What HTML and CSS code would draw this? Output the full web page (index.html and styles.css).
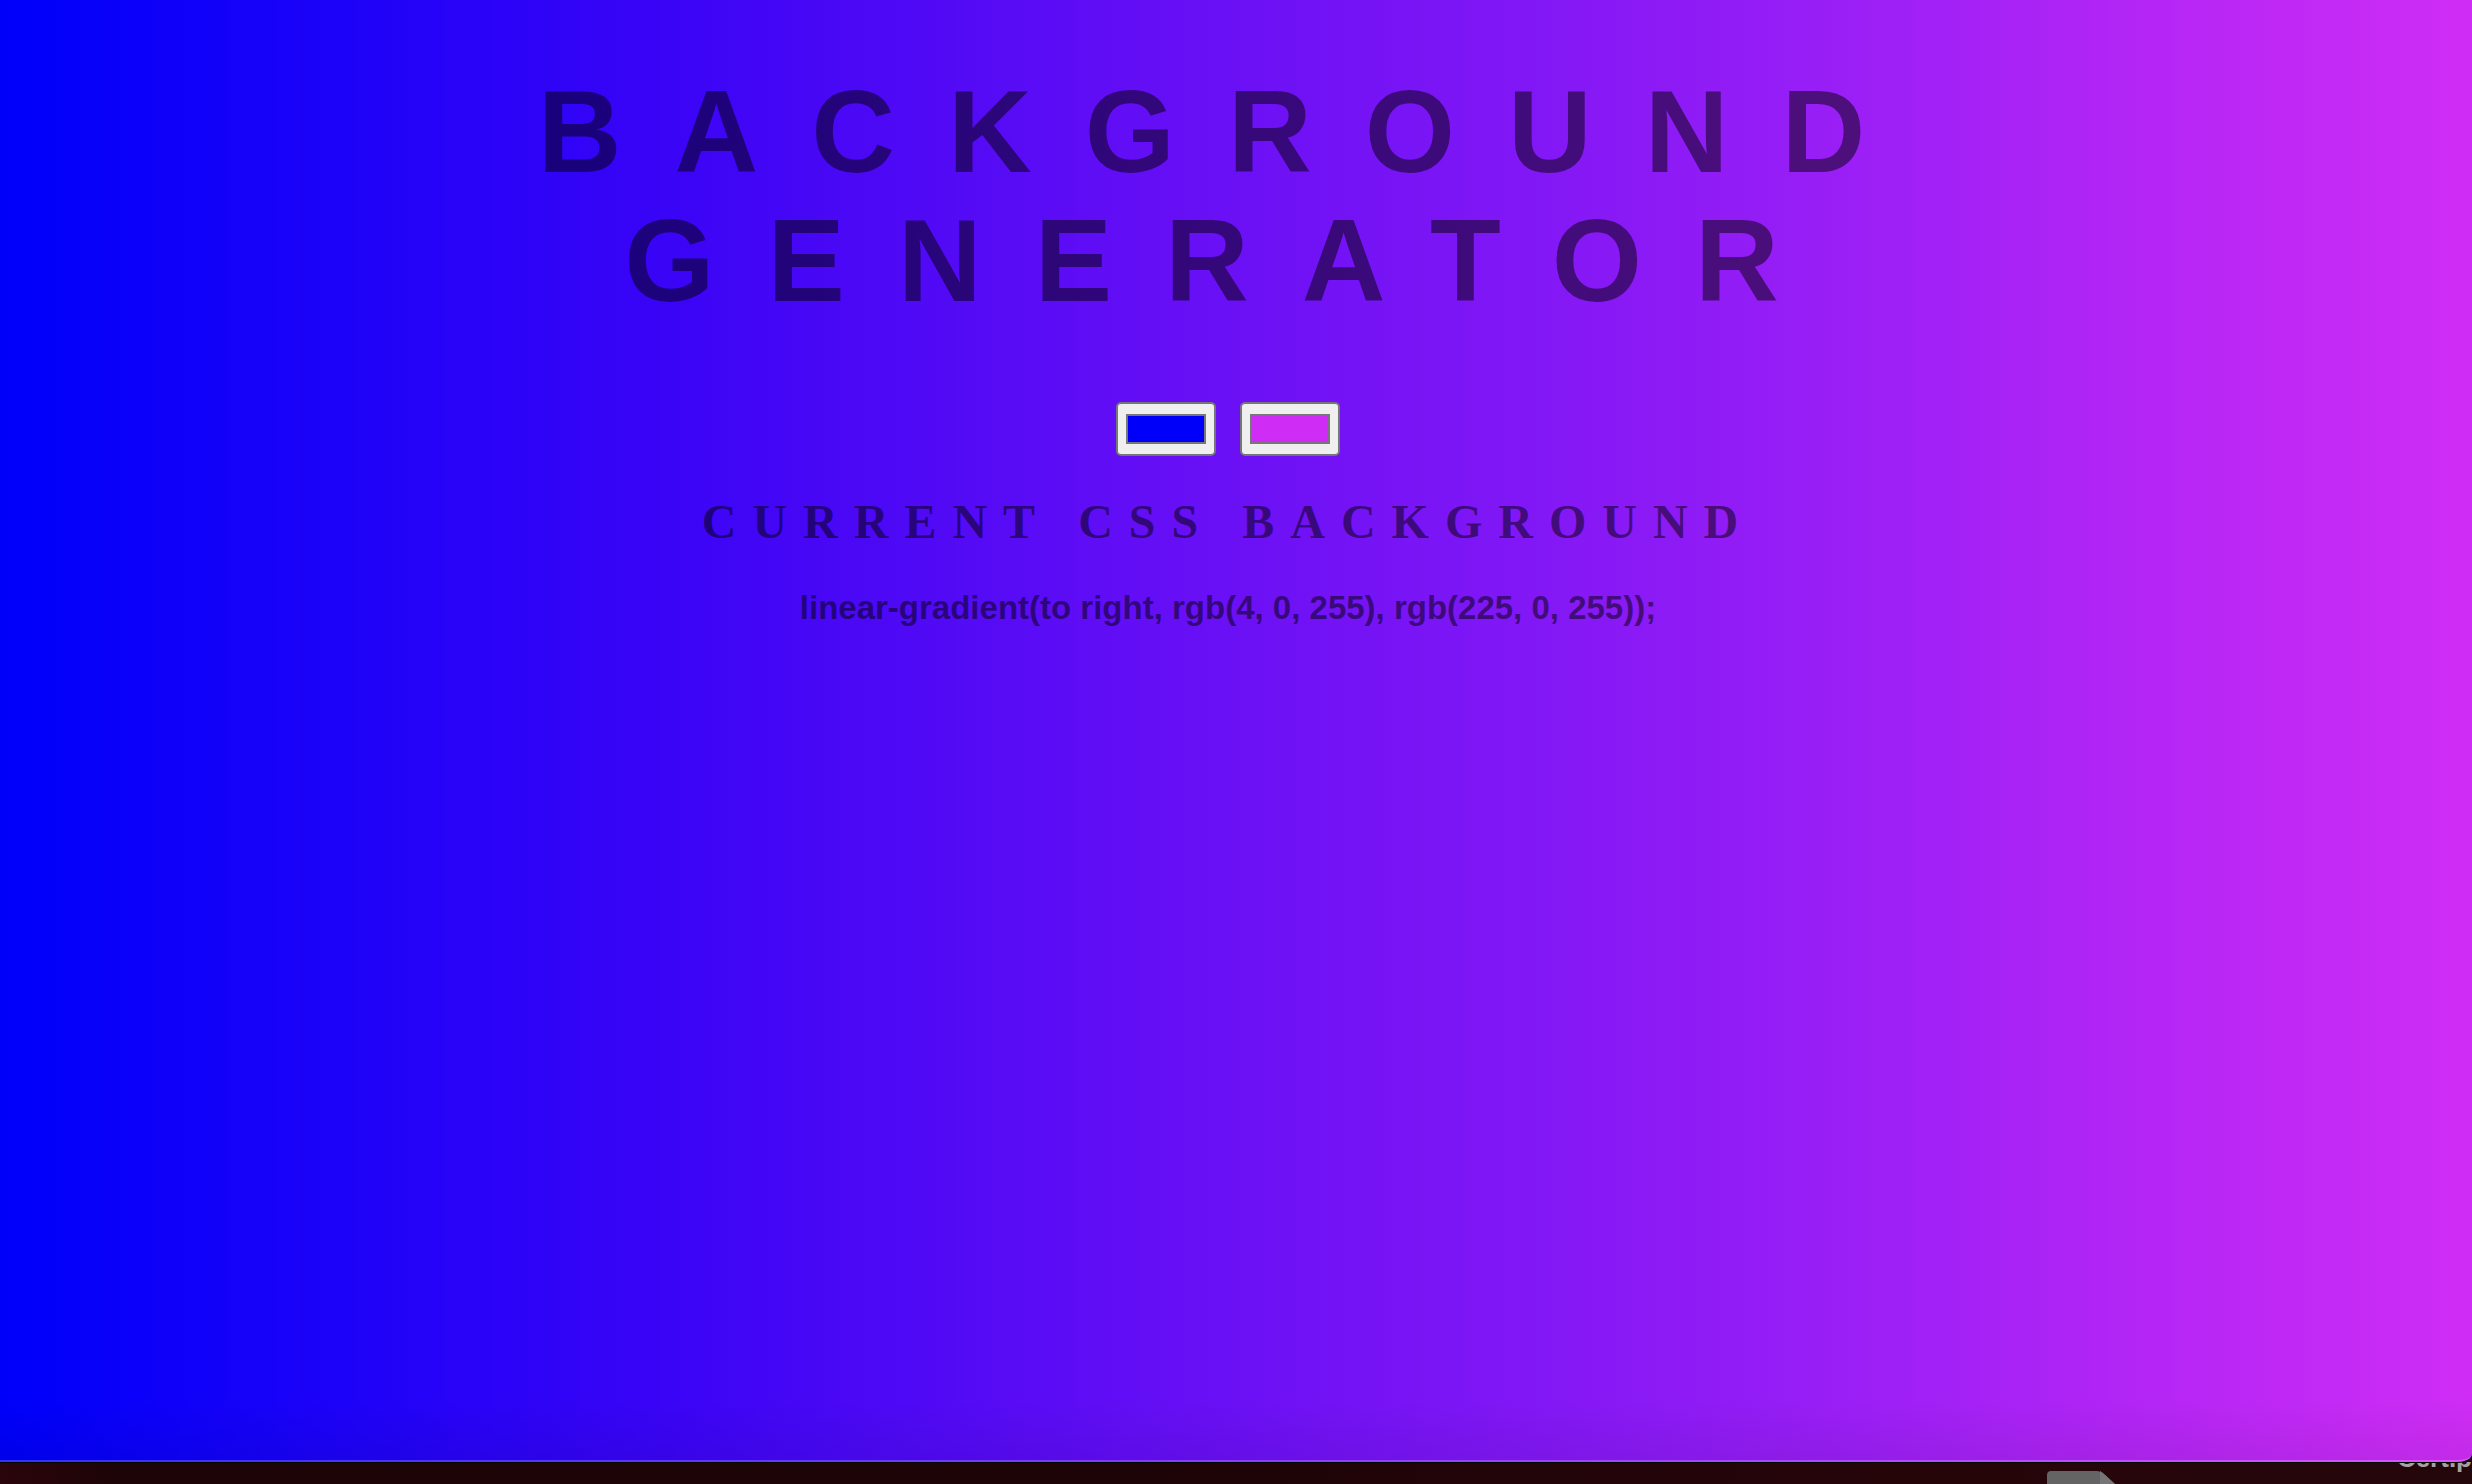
FILE: index.html
```html
<!DOCTYPE html>
<html lang="en">
<head>
<meta charset="utf-8">
<title>Background Generator</title>
<meta name="viewport" content="width=device-width, initial-scale=1">
<link rel="stylesheet" href="styles.css">
</head>
<body>
<main class="generator">
  <h1 class="title">Background Generator</h1>
  <div class="pickers">
    <input class="picker" type="color" value="#0000fa" aria-label="First color">
    <input class="picker" type="color" value="#cf2df5" aria-label="Second color">
  </div>
  <h2 class="subtitle">Current CSS Background</h2>
  <h3 class="css-value">linear-gradient(to right, rgb(4, 0, 255), rgb(225, 0, 255));</h3>
</main>
<footer class="desktop">
  <svg class="file-icon" viewBox="0 0 68 16" aria-hidden="true">
    <path d="M0 16V4Q0 0 4 0H50Q54 0 57 3L68 13V16Z" fill="#656465"/>
    <path d="M53 0Q55 1 57 3L68 13V16H53Z" fill="#777577"/>
  </svg>
  <span class="file-name">Cert.p</span>
</footer>
</body>
</html>
```
FILE: styles.css
```css
* {
  box-sizing: border-box;
}

body {
  margin: 0;
  min-height: 100vh;
  display: flex;
  flex-direction: column;
  overflow: hidden;
  background: #1e0408;
  font-family: "Liberation Sans", Arial, sans-serif;
  color: rgba(0, 0, 0, 0.5);
  text-align: center;
}

.generator {
  flex: 1;
  padding: 68px 16px 0 0;
  border-bottom: 2px solid rgba(255, 255, 255, 0.2);
  border-radius: 0 0 15px 0 / 0 0 8px 0;
  background:
    linear-gradient(to top, rgba(0, 0, 0, 0.06), transparent 60px),
    linear-gradient(to right, #0000fa, #0300fa 2%, #3a04f6 27%, #6b10f5 50%, #9b1ff6 75%, #cf2df5);
  box-shadow: 0 1px 0 #000;
  position: relative;
}

.title {
  margin: 0;
  font-size: 116px;
  line-height: 129px;
  letter-spacing: 53px;
  text-transform: uppercase;
}

.pickers {
  display: flex;
  justify-content: center;
  gap: 24px;
  margin: 76px 0 38px;
}

.picker {
  appearance: none;
  width: 100px;
  height: 54px;
  padding: 0;
  border: 2px solid #767676;
  border-radius: 5px;
  background: #efefef;
}

.picker::-webkit-color-swatch-wrapper {
  padding: 10px 8px;
}

.picker::-webkit-color-swatch {
  border: 2px solid #777;
  border-radius: 0;
}

.subtitle {
  margin: 0;
  font-family: "Liberation Serif", "Times New Roman", serif;
  font-size: 48px;
  line-height: 56px;
  letter-spacing: 16px;
  text-transform: uppercase;
}

.css-value {
  margin: 40px 0 0;
  font-size: 33px;
  line-height: 36px;
}

.desktop {
  display: flex;
  justify-content: flex-end;
  gap: 282px;
  height: 22px;
  overflow: hidden;
  background: linear-gradient(to right, #2a050b, #1c0407 5%, #1c0407 40%, #260509 80%, #24070b);
}

.file-icon {
  flex: none;
  width: 68px;
  height: 16px;
  margin-top: 9px;
}

.file-name {
  flex: none;
  margin-top: -19px;
  font-size: 26px;
  line-height: 30px;
  font-weight: bold;
  color: #a5a2a3;
}
```
